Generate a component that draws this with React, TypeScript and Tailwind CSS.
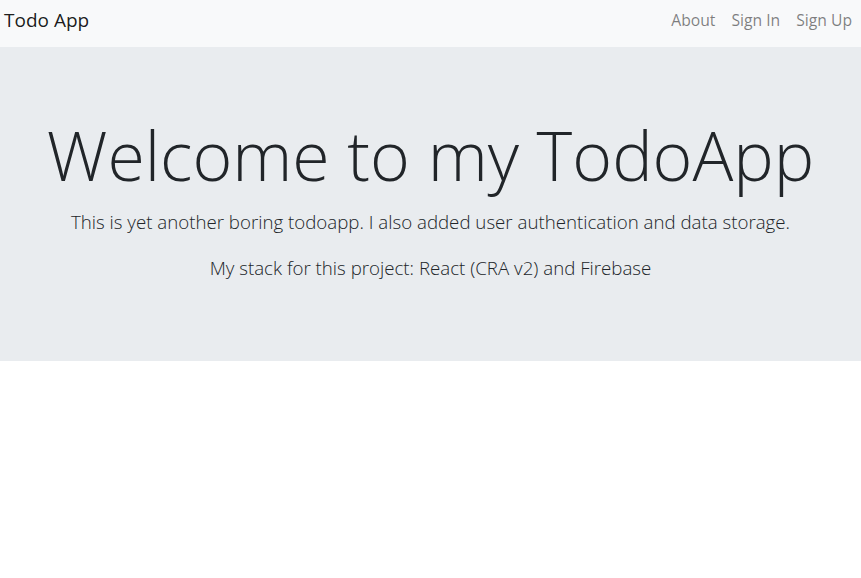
export default function App() {
    const links = ['About', 'Sign In', 'Sign Up'];

    return (
        <div className="min-h-screen bg-white text-[#212529] [font-family:'Open_Sans',sans-serif]">
            {/* navbar */}
            <nav className="flex h-[47px] items-center justify-between bg-[#f8f9fa] pb-[6px] pl-1 pr-[1px]">
                <a className="text-[19px] font-normal text-black/90">Todo App</a>
                <ul className="flex">
                    {links.map((link) => (
                        <li key={link}>
                            <a className="block px-2 text-[15.7px] text-black/50">{link}</a>
                        </li>
                    ))}
                </ul>
            </nav>

            {/* jumbotron */}
            <div className="flex h-[314px] flex-col items-center bg-[#e9ecef] pt-[64px] text-center">
                <h1 className="text-[68px] font-light leading-[88px]">Welcome to my TodoApp</h1>
                <p className="mt-2 text-[18.7px] font-light leading-[30px]">
                    This is yet another boring todoapp. I also added user authentication and data storage.
                </p>
                <p className="mt-4 text-[18.7px] font-light leading-[30px]">
                    My stack for this project: React (CRA v2) and Firebase
                </p>
            </div>
        </div>
    );
}
